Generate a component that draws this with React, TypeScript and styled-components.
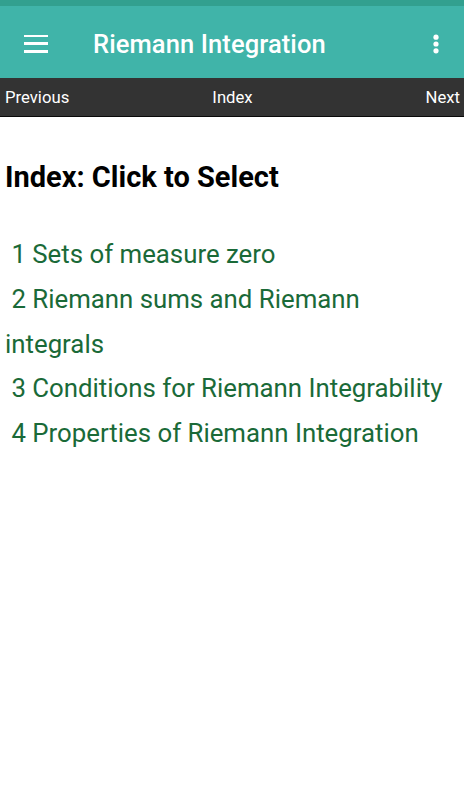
import React from "react";
import styled, { createGlobalStyle } from "styled-components";

const Global = createGlobalStyle`
  html, body { margin: 0; padding: 0; background: #fff; }
  body { font-family: Roboto, "Noto Sans", sans-serif; }
`;

const Page = styled.div`
  width: 464px;
  min-height: 800px;
  display: flex;
  flex-direction: column;
  background: #fff;
`;

const StatusBar = styled.div`
  height: 6px;
  background: #32a08f;
`;

const AppBar = styled.header`
  height: 72px;
  box-sizing: border-box;
  background: #40b4a9;
  display: flex;
  align-items: center;
  padding: 3px 24px 0 24px;
  color: #fff;
`;

const MenuButton = styled.div`
  width: 24px;
  height: 18px;
  display: flex;
  flex-direction: column;
  justify-content: space-between;
  margin-right: 45px;
  span {
    display: block;
    height: 2.5px;
    background: #fff;
  }
`;

const Title = styled.h1`
  flex: 1;
  margin: 0;
  font-size: 25.5px;
  font-weight: 500;
  letter-spacing: 0.1px;
`;

const NavBar = styled.nav`
  height: 38px;
  background: #333333;
  border-bottom: 1px solid #0a0a0a;
  display: flex;
  align-items: center;
  justify-content: space-between;
  padding: 0 4px 0 5px;
  color: #fff;
  font-size: 16.7px;
`;

const NavItem = styled.span<{ $align: string }>`
  flex: 1;
  text-align: ${(p) => p.$align};
`;

const Content = styled.main`
  padding: 44px 5px 0 5px;
`;

const Heading = styled.h2`
  margin: 0 0 39px 0;
  font-size: 29px;
  font-weight: 700;
  color: #000;
  line-height: 32px;
`;

const List = styled.div`
  display: flex;
  flex-direction: column;
`;

const Item = styled.a`
  font-size: 25.8px;
  line-height: 44.75px;
  color: #1a6a38;
  text-decoration: none;
`;

const Num = styled.span`
  color: #0b5225;
`;

const items = [
  "Sets of measure zero",
  "Riemann sums and Riemann integrals",
  "Conditions for Riemann Integrability",
  "Properties of Riemann Integration",
];

export default function App() {
  return (
    <Page>
      <Global />
      <StatusBar />
      <AppBar>
        <MenuButton>
          <span />
          <span />
          <span />
        </MenuButton>
        <Title>Riemann Integration</Title>
        <svg width="8" height="20" viewBox="0 0 8 20">
          <circle cx="4" cy="3.2" r="2.6" fill="#fff" />
          <circle cx="4" cy="10" r="2.6" fill="#fff" />
          <circle cx="4" cy="16.8" r="2.6" fill="#fff" />
        </svg>
      </AppBar>
      <NavBar>
        <NavItem $align="left">Previous</NavItem>
        <NavItem $align="center">Index</NavItem>
        <NavItem $align="right">Next</NavItem>
      </NavBar>
      <Content>
        <Heading>Index: Click to Select</Heading>
        <List>
          {items.map((t, i) => (
            <Item key={i}>{`\u00a0${i + 1} ${t}`}</Item>
          ))}
        </List>
      </Content>
    </Page>
  );
}
